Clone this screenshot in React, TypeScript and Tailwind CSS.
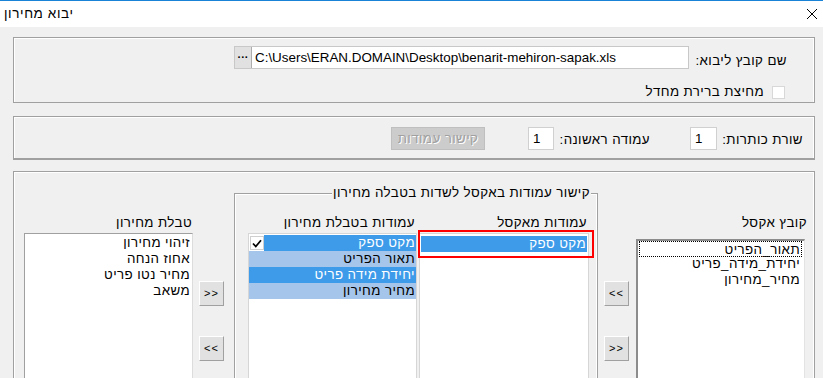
import React from "react";

const Btn = ({ children }: { children: React.ReactNode }) => (
  <div
    dir="ltr"
    className="w-[25px] h-[25px] bg-[#e1e1e1] border border-t-white border-l-white border-r-[#a0a0a0] border-b-[#a0a0a0] flex items-center justify-center text-[11px] leading-none text-black tracking-[1px]"
  >
    {children}
  </div>
);

const Label = ({ children, className = "" }: { children: React.ReactNode; className?: string }) => (
  <div className={"h-[16px] leading-[16px] whitespace-nowrap " + className}>{children}</div>
);

const Row = ({ children, className = "" }: { children: React.ReactNode; className?: string }) => (
  <div className={"h-[16px] leading-[16px] whitespace-nowrap pr-[1px] " + className}>{children}</div>
);

export default function App() {
  return (
    <div
      dir="rtl"
      className="w-[823px] h-[378px] overflow-hidden bg-[#f0f0f0] font-[Liberation_Sans,Arial,sans-serif] text-[13.33px] tracking-[0.4px] text-black"
    >
      {/* Title bar */}
      <div dir="ltr" className="h-[27px] bg-white border-t border-[#1883d7] flex items-center justify-between pl-[4px] pr-[5px]">
        <span dir="rtl" className="text-[13.5px] leading-[16px] tracking-[0.6px] text-black">יבוא מחירון</span>
        <svg width="12" height="12" viewBox="0 0 12 12">
          <path d="M1 1 L11 11 M11 1 L1 11" stroke="#000" strokeWidth="1" fill="none" />
        </svg>
      </div>

      <div className="pt-[10px] pl-[13px] pr-[8px] flex flex-col">
        {/* Panel 1 */}
        <div className="h-[66px] border border-[#a0a0a0] shadow-[inset_1px_1px_0_#fff,inset_-1px_0_0_#fff] flex flex-col">
          <div className="flex items-start pt-[8px] pr-[27px]">
            <Label className="w-[98px] mt-[7px]">שם קובץ ליבוא:</Label>
            <div dir="ltr" className="w-[455px] h-[23px] bg-white border border-[#c8c8c8] flex items-stretch tracking-normal">
              <div className="w-[17px] bg-[#e1e1e1] border-r border-[#adadad] flex items-center justify-center text-[11px] leading-none font-bold">
                ···
              </div>
              <div className="pl-[3px] leading-[21px] whitespace-nowrap text-[13.4px]">
                C:\Users\ERAN.DOMAIN\Desktop\benarit-mehiron-sapak.xls
              </div>
            </div>
          </div>
          <div className="flex items-center mt-[15px] pr-[29px]">
            <div className="w-[13px] h-[13px] bg-white border border-[#d8d8d8]" />
            <Label className="mr-[8px]">מחיצת ברירת מחדל</Label>
          </div>
        </div>

        {/* Panel 2 */}
        <div className="mt-[13px] h-[44px] border border-[#a0a0a0] border-b-2 shadow-[inset_1px_1px_0_#fff,inset_-1px_0_0_#fff] flex items-start pr-[11px]">
          <Label className="w-[86px] mt-[15px]">שורת כותרות:</Label>
          <div className="w-[27px] h-[23px] mt-[10px] bg-white border border-[#d0d0d0] flex items-center justify-end pl-[4px] leading-none">1</div>
          <Label className="w-[96px] mr-[40px] mt-[15px]">עמודה ראשונה:</Label>
          <div className="w-[26px] h-[23px] mt-[10px] bg-white border border-[#d0d0d0] flex items-center justify-end pl-[4px] leading-none">1</div>
          <div className="w-[94px] h-[23px] mt-[10px] mr-[43px] bg-[#cccccc] border border-[#bfbfbf] flex items-center justify-center text-[#a0a0a0] [text-shadow:1px_1px_0_#fff] leading-none">
            קישור עמודות
          </div>
        </div>

        {/* Panel 3 */}
        <div className="mt-[11px] h-[230px] border border-[#a0a0a0] shadow-[inset_1px_1px_0_#fff,inset_-1px_0_0_#fff] flex items-start pr-[9px]">
          {/* Excel file column */}
          <div className="mt-[43px] flex flex-col w-[169px]">
            <Label className="-mr-[2px]">קובץ אקסל</Label>
            <div className="mt-[8px] h-[160px] bg-white border-t-2 border-l-2 border-t-[#8c8c8c] border-l-[#8c8c8c] border-r border-b border-r-[#e3e3e3] border-b-[#e3e3e3] pr-[2px] pl-[1px]">
              <Row className="border border-dotted border-black pr-[1px]">תאור_הפריט</Row>
              <Row className="pr-[2px] -mt-[1px]">יחידת_מידה_פריט</Row>
              <Row className="pr-[2px]">מחיר_מחירון</Row>
            </div>
          </div>

          {/* Buttons right */}
          <div className="mt-[109px] mr-[7px] flex flex-col gap-[30px]">
            <Btn>&lt;&lt;</Btn>
            <Btn>&gt;&gt;</Btn>
          </div>

          {/* Group box */}
          <div className="relative mt-[21px] mr-[6px] w-[364px] h-[200px] border border-[#a0a0a0] shadow-[inset_1px_1px_0_#fff,inset_-1px_0_0_#fff] flex items-start pt-[21px] pr-[8px]">
            <div className="absolute -top-[9px] right-[6px] px-[1px] bg-[#f0f0f0] h-[16px] leading-[16px] whitespace-nowrap">
              קישור עמודות באקסל לשדות בטבלה מחירון
            </div>

            {/* Excel columns */}
            <div className="flex flex-col w-[170px]">
              <Label className="pr-[2px]">עמודות מאקסל</Label>
              <div className="mt-[2px] h-[160px] bg-white border border-[#d6d6d6] pt-[2px] px-[1px]">
                <Row className="bg-[#3d9bea] text-white">מקט ספק</Row>
              </div>
            </div>

            {/* Table columns */}
            <div className="flex flex-col w-[169px] mr-[2px]">
              <Label className="pr-[2px]">עמודות בטבלת מחירון</Label>
              <div className="mt-[2px] h-[160px] bg-white border border-[#d6d6d6] pt-[1px]">
                <div className="flex h-[16px]">
                  <Row className="flex-1 bg-[#3d9bea] text-white">מקט ספק</Row>
                  <div className="w-[15px] h-[16px] flex items-center justify-center">
                    <div className="w-[14px] h-[14px] border border-[#cfcfcf] bg-white flex items-center justify-center">
                      <svg width="10" height="9" viewBox="0 0 10 9">
                        <path d="M1 4.5 L3.8 7.5 L9 1.2" stroke="#000" strokeWidth="1.8" fill="none" />
                      </svg>
                    </div>
                  </div>
                </div>
                <Row className="bg-[#a6c5ea]">תאור הפריט</Row>
                <Row className="bg-[#3d9bea] text-white">יחידת מידה פריט</Row>
                <Row className="bg-[#a6c5ea]">מחיר מחירון</Row>
              </div>
            </div>

            {/* Red highlight */}
            <div className="absolute left-[183px] top-[36px] w-[176px] h-[28px] border-2 border-[#ff0000]" />
          </div>

          {/* Buttons left */}
          <div className="mt-[109px] mr-[10px] flex flex-col gap-[30px]">
            <Btn>&gt;&gt;</Btn>
            <Btn>&lt;&lt;</Btn>
          </div>

          {/* Pricelist table column */}
          <div className="mt-[43px] mr-[6px] flex flex-col w-[169px]">
            <Label className="pr-[1px]">טבלת מחירון</Label>
            <div className="mt-[2px] h-[160px] bg-white border border-l-[#a0a0a0] border-t-[#a0a0a0] border-r-[#dcdcdc] border-b-[#dcdcdc] pt-[1px] pr-[1px]">
              <Row>זיהוי מחירון</Row>
              <Row>אחוז הנחה</Row>
              <Row>מחיר נטו פריט</Row>
              <Row>משאב</Row>
            </div>
          </div>
        </div>
      </div>
    </div>
  );
}
